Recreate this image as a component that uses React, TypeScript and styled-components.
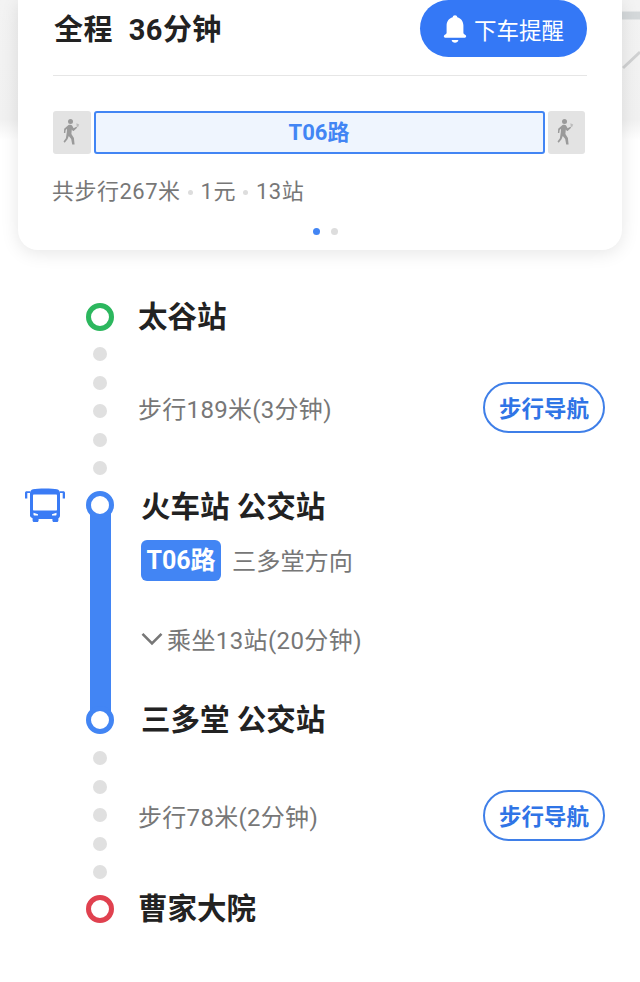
import React from "react";
import styled, { createGlobalStyle } from "styled-components";

const BLUE = "#4285f4";

const GlobalStyle = createGlobalStyle`
  html, body {
    margin: 0;
    padding: 0;
    background: #fff;
  }
  * {
    box-sizing: border-box;
  }
`;

const WalkIcon = () => (
  <svg width="18" height="30" viewBox="0 0 18 30" fill="#9a9a9a">
    <circle cx="7.500" cy="3.400" r="2.500" />
    <path d="M5.500 7c1.500-.6 2.800-.4 3.600.6l1.500 2.600 2.800-1.500.7 1.100-3.200 2.900c-.5.400-1 .3-1.400-.1l-.7-1-.4 4.400 2.500 4 .7 6.500H9.200l-1-5.600-2.400-3-1.300 3.300-2.800 3.500-1.200-1.200 2.400-3.300.9-6 .2-3.400-1.300 1.300-.4 3-1.400-.2.300-4.200z" />
    <path d="M13.400 5.200l2.800 1.400-1.200 2.600-1.300-.6z" opacity=".55" />
  </svg>
);

const BellIcon = () => (
  <svg width="26" height="30" viewBox="0 0 26 30" fill="#fff">
    <path d="M13 1.200c1.300 0 2.200.9 2.300 2.100 3.900 1 6.100 4.200 6.100 8.300v7.200c0 1 .9 1.600 2.100 2.300.9.600 1.100 2.600-.6 2.600H3.100c-1.700 0-1.500-2-.6-2.600 1.200-.7 2.100-1.300 2.100-2.300v-7.200c0-4.100 2.200-7.300 6.100-8.300.1-1.200 1-2.100 2.300-2.100z" />
    <path d="M9.600 26h6.800c-.3 1.700-1.700 2.800-3.400 2.800S9.900 27.700 9.600 26z" />
  </svg>
);

const BusIcon = () => (
  <svg width="40" height="34" viewBox="0 0 40 34" fill="#3a7bf5">
    <path d="M8 1.300C12 .2 28 .2 32 1.300c2 .6 3 1.800 3 4V27.500c0 1.400-.6 2.300-1.600 2.700v2.300c0 .9-.6 1.500-1.400 1.500h-3.200c-.8 0-1.400-.6-1.400-1.500v-1.600H13.600v1.600c0 .9-.6 1.500-1.400 1.500H9c-.8 0-1.400-.6-1.400-1.500v-2.300C6.600 29.800 5 28.900 5 27.500V5.300c0-2.200 1-3.400 3-4z" />
    <path
      fill="#fff"
      d="M9 6.500h22c.7 0 1 .4 1 1V21.500c0 .7-.3 1-1 1H9c-.7 0-1-.3-1-1V7.500c0-.6.3-1 1-1z"
    />
    <path fill="#fff" d="M8.500 24.800l4.500 1.500v1.200H9.300c-.5 0-.8-.3-.8-.8zM31.500 24.800l-4.500 1.500v1.200h3.700c.5 0 .8-.3.8-.8z" />
    <path d="M0 4.800c0-1 .7-1.600 1.700-1.600H5v1.900H2.300v5.400H0zM40 4.800c0-1-.7-1.600-1.700-1.600H35v1.900h2.700v5.400H40z" />
  </svg>
);

const ChevronIcon = () => (
  <svg width="22" height="14" viewBox="0 0 22 14" fill="none" stroke="#777" strokeWidth="2.600">
    <path d="M1.500 1.800L11 11.500l9.500-9.700" />
  </svg>
);

const route = {
  total: "36分钟",
  line: "T06路",
  direction: "三多堂方向",
  ride: "乘坐13站(20分钟)",
};

export default function App() {
  return (
    <Page>
      <GlobalStyle />
      <MapBackdrop>
        <svg width="640" height="140" viewBox="0 0 640 140" fill="none">
          <path d="M622 15.500h18" stroke="#d4d8da" strokeWidth="8" />
          <path d="M623 68l17-16" stroke="#d0d1d2" strokeWidth="3" />
        </svg>
      </MapBackdrop>

      <Card>
        <CardHead>
          <Total>
            <span>全程</span>
            <span>{route.total}</span>
          </Total>
          <RemindButton>
            <BellIcon />
            下车提醒
          </RemindButton>
        </CardHead>
        <Divider />
        <Legs>
          <WalkLeg>
            <WalkIcon />
          </WalkLeg>
          <BusLeg>{route.line}</BusLeg>
          <WalkLeg>
            <WalkIcon />
          </WalkLeg>
        </Legs>
        <Stats>
          共步行267米
          <StatDot />
          1元
          <StatDot />
          13站
        </Stats>
        <Pager>
          <PagerDot $active />
          <PagerDot />
        </Pager>
      </Card>

      <Timeline>
        <StopRow>
          <Ring $color="#2cb75e" />
          <StopName>太谷站</StopName>
        </StopRow>

        <WalkSection label="步行189米(3分钟)" labelShift={-7} navShift={-8} />

        <BusSection>
          <BusBadge>
            <BusIcon />
          </BusBadge>
          <BusRail>
            <Ring $color={BLUE} />
            <RailBar />
            <Ring $color={BLUE} />
          </BusRail>
          <BusBody>
            <BusStopName>火车站 公交站</BusStopName>
            <LineRow>
              <LineTag>{route.line}</LineTag>
              <Direction>{route.direction}</Direction>
            </LineRow>
            <RideRow>
              <ChevronIcon />
              {route.ride}
            </RideRow>
            <BusStopName>三多堂 公交站</BusStopName>
          </BusBody>
        </BusSection>

        <WalkSection label="步行78米(2分钟)" labelShift={1} navShift={0} />

        <StopRow>
          <Ring $color="#e0414f" />
          <StopName>曹家大院</StopName>
        </StopRow>
      </Timeline>
    </Page>
  );
}

const WalkSection = ({
  label,
  labelShift,
  navShift,
}: {
  label: string;
  labelShift: number;
  navShift: number;
}) => (
  <WalkRow>
    <DotRail>
      {[0, 1, 2, 3, 4].map((i) => (
        <RailDot key={i} />
      ))}
    </DotRail>
    <WalkLabel $shift={labelShift}>{label}</WalkLabel>
    <NavButton $shift={navShift}>步行导航</NavButton>
  </WalkRow>
);

const Page = styled.div`
  position: relative;
  width: 640px;
  height: 982px;
  overflow: hidden;
  background: #fff;
  font-family: Roboto, "Noto Sans CJK SC", sans-serif;
`;

const MapBackdrop = styled.div`
  position: absolute;
  top: 0;
  left: 0;
  width: 640px;
  height: 140px;
  background: linear-gradient(#f3f3f3 0%, #f1f1f1 85%, #fff 100%);
`;

const Card = styled.section`
  position: relative;
  width: 604px;
  height: 250px;
  margin-left: 18px;
  padding: 0 35px;
  background: #fff;
  border-radius: 0 0 20px 20px;
  box-shadow: 0 3px 18px rgba(0, 0, 0, 0.1);
`;

const CardHead = styled.div`
  display: flex;
  justify-content: space-between;
  align-items: flex-start;
  height: 75px;
`;

const Total = styled.div`
  display: flex;
  gap: 16px;
  margin-top: 9px;
  padding-left: 1px;
  font-size: 29px;
  line-height: 42px;
  font-weight: 700;
  letter-spacing: 0.4px;
  color: #222;
`;

const RemindButton = styled.button`
  display: flex;
  align-items: center;
  gap: 6px;
  width: 167px;
  height: 57px;
  padding: 0 0 0 22px;
  border: 0;
  border-radius: 29px;
  background: #3478f6;
  color: #fff;
  font-family: inherit;
  font-size: 22.500px;
  white-space: nowrap;
`;

const Divider = styled.div`
  height: 1px;
  background: #e6e6e6;
`;

const Legs = styled.div`
  display: flex;
  gap: 3px;
  width: 532px;
  margin-top: 35px;
`;

const WalkLeg = styled.div`
  display: flex;
  align-items: center;
  justify-content: center;
  flex: 0 0 37.500px;
  height: 43px;
  border-radius: 3px;
  background: #e3e3e3;
`;

const BusLeg = styled.div`
  flex: 1;
  height: 43px;
  border: 2px solid ${BLUE};
  border-radius: 3px;
  background: #eff5fe;
  color: ${BLUE};
  font-size: 22px;
  font-weight: 700;
  line-height: 39px;
  text-align: center;
`;

const Stats = styled.div`
  display: flex;
  align-items: center;
  margin-top: 22px;
  margin-left: -1px;
  font-size: 22px;
  line-height: 32px;
  letter-spacing: 0.5px;
  color: #777;
`;

const StatDot = styled.span`
  width: 5px;
  height: 5px;
  margin: 0 8px 0 7px;
  border-radius: 50%;
  background: #ddd;
`;

const Pager = styled.div`
  display: flex;
  justify-content: center;
  gap: 11px;
  margin-top: 20px;
  padding-left: 11px;
`;

const PagerDot = styled.span<{ $active?: boolean }>`
  width: 7px;
  height: 7px;
  border-radius: 50%;
  background: ${(p) => (p.$active ? BLUE : "#ddd")};
`;

const Timeline = styled.div`
  display: flex;
  flex-direction: column;
  padding: 53px 35px 0 86px;
`;

const StopRow = styled.div`
  display: flex;
  align-items: center;
  height: 28px;
`;

const Ring = styled.span<{ $color: string }>`
  position: relative;
  z-index: 1;
  flex: 0 0 28px;
  width: 28px;
  height: 28px;
  border: 5px solid ${(p) => p.$color};
  border-radius: 50%;
  background: #fff;
`;

const StopName = styled.div`
  margin-left: 24px;
  font-size: 29.500px;
  font-weight: 700;
  line-height: 42px;
  color: #222;
`;

const WalkRow = styled.div`
  display: flex;
  align-items: center;
  height: 160px;
`;

const DotRail = styled.div`
  display: flex;
  flex-direction: column;
  align-items: center;
  gap: 14.500px;
  width: 28px;
`;

const RailDot = styled.span`
  width: 14px;
  height: 14px;
  border-radius: 50%;
  background: #e0e0e0;
`;

const WalkLabel = styled.div<{ $shift: number }>`
  flex: 1;
  margin-top: ${(p) => p.$shift}px;
  margin-left: 24px;
  font-size: 24px;
  letter-spacing: 0.3px;
  color: #777;
`;

const NavButton = styled.button<{ $shift: number }>`
  width: 122px;
  height: 51px;
  margin-top: ${(p) => p.$shift}px;
  padding: 0;
  border: 2px solid #3f7fe8;
  border-radius: 26px;
  background: #fff;
  color: #2f74e6;
  font-family: inherit;
  font-size: 22.500px;
  font-weight: 700;
`;

const BusSection = styled.div`
  position: relative;
  display: flex;
  align-items: stretch;
  height: 243px;
  margin-bottom: 1px;
`;

const BusBadge = styled.div`
  position: absolute;
  top: -3px;
  left: -61px;
`;

const BusRail = styled.div`
  display: flex;
  flex-direction: column;
  align-items: center;
  width: 28px;
`;

const RailBar = styled.div`
  flex: 1;
  width: 21px;
  margin: -10px 0;
  background: ${BLUE};
`;

const BusBody = styled.div`
  display: flex;
  flex-direction: column;
  margin-left: 27px;
`;

const BusStopName = styled.div`
  margin-top: -5px;
  font-size: 29.500px;
  font-weight: 700;
  line-height: 42px;
  white-space: nowrap;
  color: #222;
`;

const LineRow = styled.div`
  display: flex;
  align-items: center;
  gap: 11px;
  margin-top: 12px;
`;

const LineTag = styled.span`
  width: 80px;
  height: 41px;
  border-radius: 6px;
  background: ${BLUE};
  color: #fff;
  font-size: 25px;
  font-weight: 700;
  line-height: 41px;
  text-align: center;
  white-space: nowrap;
`;

const Direction = styled.span`
  margin-top: -3px;
  font-size: 24.200px;
  color: #777;
`;

const RideRow = styled.div`
  display: flex;
  align-items: center;
  gap: 4px;
  height: 41px;
  margin-top: 40px;
  margin-bottom: 48px;
  font-size: 24px;
  letter-spacing: 0.4px;
  color: #777;
  white-space: nowrap;
`;
